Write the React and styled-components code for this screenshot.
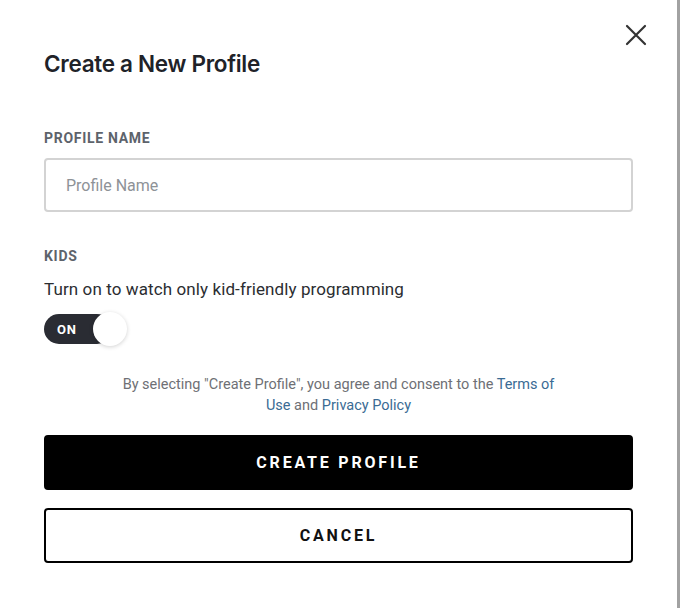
import React from 'react'
import styled, { createGlobalStyle } from 'styled-components'

const GlobalStyle = createGlobalStyle`
  html, body {
    margin: 0;
    padding: 0;
    background: #ffffff;
  }
  * {
    box-sizing: border-box;
  }
`

const Modal = styled.div`
  position: relative;
  width: 680px;
  height: 608px;
  background: #fff;
  border-right: 3px solid #a2a2a2;
  padding: 48px 44px 0 44px;
  font-family: Inter, "Noto Sans", sans-serif;
  color: #1f2126;
`

const CloseButton = styled.button`
  position: absolute;
  top: 22px;
  right: 28px;
  width: 26px;
  height: 26px;
  padding: 0;
  border: none;
  background: transparent;
  cursor: pointer;
  display: flex;
  align-items: center;
  justify-content: center;
`

const Title = styled.h1`
  margin: 0;
  font-size: 22.5px;
  line-height: 31px;
  font-weight: 600;
  letter-spacing: -0.3px;
  color: #202228;
`

const Label = styled.div`
  margin-top: ${p => p.$top || 0}px;
  font-family: Roboto, "Noto Sans", sans-serif;
  font-size: 14px;
  line-height: 16px;
  font-weight: 700;
  letter-spacing: 0.7px;
  color: #5d636b;
`

const Input = styled.input`
  display: block;
  width: 100%;
  height: 54px;
  margin-top: 12px;
  padding: 0 20px;
  border: 2px solid #d3d3d3;
  border-radius: 4px;
  font-family: Roboto, "Noto Sans", sans-serif;
  font-size: 16px;
  color: #222;
  outline: none;
  &::placeholder {
    color: #8e9297;
  }
`

const Description = styled.p`
  margin: 14px 0 0 0;
  font-family: Roboto, "Noto Sans", sans-serif;
  font-size: 17px;
  line-height: 22px;
  letter-spacing: 0.1px;
  color: #2b2d31;
`

const Toggle = styled.button`
  position: relative;
  display: flex;
  align-items: center;
  width: 86px;
  height: 36px;
  margin-top: 11px;
  padding: 0;
  border: none;
  background: transparent;
  cursor: pointer;
`

const Track = styled.span`
  display: flex;
  align-items: center;
  width: 68px;
  height: 30px;
  padding-left: 13px;
  border-radius: 15px;
  background: #2a2c33;
  color: #fff;
  font-family: Roboto, "Noto Sans", sans-serif;
  font-size: 13px;
  font-weight: 700;
  letter-spacing: 0.8px;
`

const Knob = styled.span`
  position: absolute;
  left: 49px;
  top: 1px;
  width: 34px;
  height: 34px;
  border-radius: 50%;
  background: #fff;
  box-shadow: 0 1px 4px rgba(0, 0, 0, 0.18);
`

const Consent = styled.p`
  max-width: 450px;
  margin: 27px auto 0 auto;
  text-align: center;
  font-family: Roboto, "Noto Sans", sans-serif;
  font-size: 14.5px;
  line-height: 21px;
  color: #6e7075;
`

const TextLink = styled.a`
  color: #3a6b94;
  text-decoration: none;
`

const Button = styled.button`
  display: block;
  width: 100%;
  height: 55px;
  margin-top: ${p => p.$top}px;
  border: 2px solid #000;
  border-radius: 4px;
  background: ${p => (p.$primary ? '#000' : '#fff')};
  color: ${p => (p.$primary ? '#fff' : '#111')};
  font-family: Roboto, "Noto Sans", sans-serif;
  font-size: 16px;
  font-weight: 700;
  letter-spacing: 2.8px;
  cursor: pointer;
`

const CloseIcon = () => (
  <svg width="22" height="22" viewBox="0 0 22 22" fill="none">
    <path d="M2 2 L20 20 M20 2 L2 20" stroke="#333" strokeWidth="2.2" strokeLinecap="round" />
  </svg>
)

const App = () => {
  const [kids, setKids] = React.useState(true)

  return (
    <>
      <GlobalStyle />
      <Modal>
        <CloseButton aria-label="Close">
          <CloseIcon />
        </CloseButton>
        <Title>Create a New Profile</Title>

        <Label $top={51}>PROFILE NAME</Label>
        <Input placeholder="Profile Name" />

        <Label $top={36}>KIDS</Label>
        <Description>Turn on to watch only kid-friendly programming</Description>
        <Toggle onClick={() => setKids(!kids)}>
          <Track>{kids ? 'ON' : 'OFF'}</Track>
          <Knob />
        </Toggle>

        <Consent>
          By selecting "Create Profile", you agree and consent to the{' '}
          <TextLink href="#">Terms of</TextLink>
          <br />
          <TextLink href="#">Use</TextLink> and{' '}
          <TextLink href="#">Privacy Policy</TextLink>
        </Consent>

        <Button $primary $top={19}>CREATE PROFILE</Button>
        <Button $top={18}>CANCEL</Button>
      </Modal>
    </>
  )
}

export default App
